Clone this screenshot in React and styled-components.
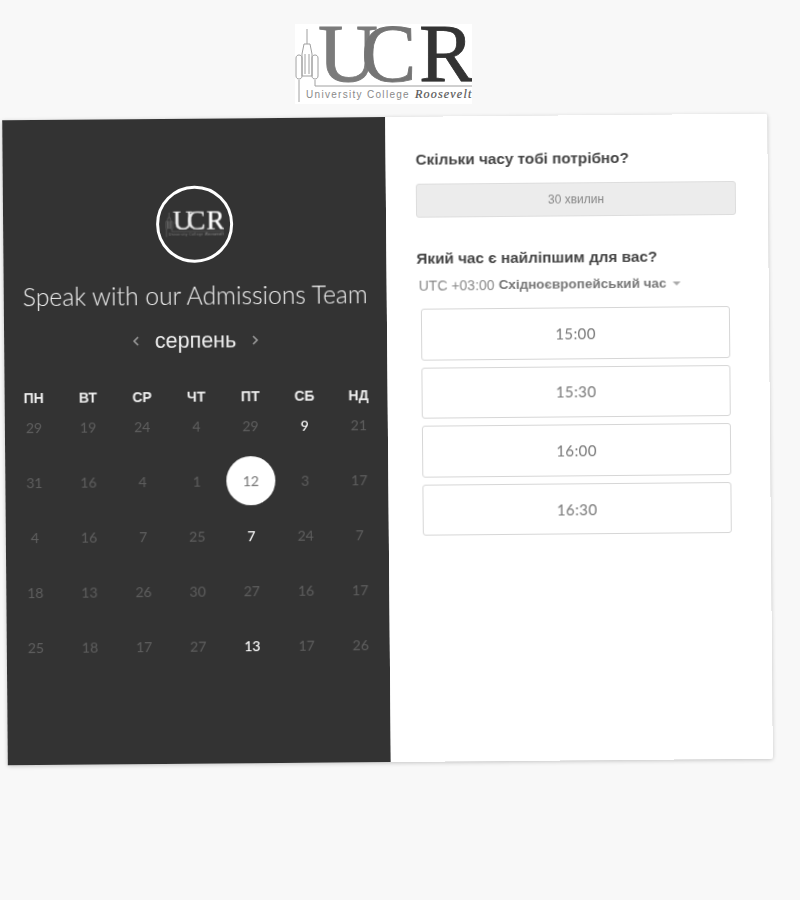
import React from 'react';
import styled, { createGlobalStyle } from 'styled-components';

const GlobalStyle = createGlobalStyle`
  html, body {
    margin: 0;
    padding: 0;
    background: #f8f8f8;
  }
  body {
    font-family: "Liberation Sans", Arial, sans-serif;
  }
`;

const Page = styled.div`
  width: 800px;
  height: 900px;
  padding: 24px 0 0 5px;
  box-sizing: border-box;
  overflow: hidden;
  filter: blur(0.35px);
`;

const LogoWrap = styled.div`
  width: 177px;
  height: 80px;
  margin: 0 0 13px 290px;
  background: #fff;
`;

const LogoSvg = styled.svg`
  display: block;
`;

const Card = styled.div`
  display: flex;
  width: 765px;
  height: 645px;
  transform: rotate(-0.5deg);
  box-shadow: 0 1px 4px rgba(0, 0, 0, 0.22);
  border-radius: 2px;
`;

const LeftPanel = styled.section`
  width: 383px;
  box-sizing: border-box;
  padding: 67px 2px 0;
  background: #333;
  color: #fff;
  display: flex;
  flex-direction: column;
  align-items: center;
`;

const Badge = styled.div`
  width: 77px;
  height: 77px;
  box-sizing: border-box;
  border: 3px solid #fff;
  border-radius: 50%;
  display: flex;
  align-items: center;
  justify-content: center;
`;

const Heading = styled.h1`
  margin: 18px 0 0;
  font: 300 24.7px/30px Lato, sans-serif;
  color: #f2f2f2;
  white-space: nowrap;
`;

const MonthRow = styled.div`
  margin-top: 17px;
  display: flex;
  align-items: center;
  gap: 15px;
  height: 26px;
`;

const MonthName = styled.span`
  font-size: 21.5px;
  line-height: 26px;
  color: #eee;
`;

const Chevron = styled.svg`
  display: block;
`;

const WeekRow = styled.div`
  margin-top: 38px;
  width: 100%;
  display: grid;
  grid-template-columns: repeat(7, 1fr);
  height: 10px;
`;

const WeekDay = styled.span`
  font-size: 14px;
  font-weight: 700;
  line-height: 10px;
  text-align: center;
  color: #eee;
`;

const DayGrid = styled.div`
  width: 100%;
  display: grid;
  grid-template-columns: repeat(7, 1fr);
  grid-auto-rows: 49px;
  row-gap: 6px;
`;

const Day = styled.span`
  justify-self: center;
  width: 49px;
  height: 49px;
  border-radius: 50%;
  display: flex;
  align-items: center;
  justify-content: center;
  font: ${(props) => (props.$active ? 500 : 400)} 14px Lato, sans-serif;
  color: ${(props) => (props.$selected ? '#777' : props.$active ? '#fff' : '#5e5e5e')};
  background: ${(props) => (props.$selected ? '#fff' : 'transparent')};
`;

const RightPanel = styled.section`
  flex: 1;
  box-sizing: border-box;
  padding: 33px 30px 0;
  background: #fff;
  border-radius: 0 2px 2px 0;
`;

const Question = styled.h2`
  margin: ${(props) => props.$top || 0}px 0 0;
  font-size: 15.3px;
  font-weight: 700;
  line-height: 20px;
  color: #444;
`;

const DurationBox = styled.div`
  margin-top: 14px;
  width: 320px;
  height: 34px;
  box-sizing: border-box;
  background: #ececec;
  border: 1px solid #ddd;
  border-radius: 3px;
  display: flex;
  align-items: center;
  justify-content: center;
  font-size: 12px;
  color: #888;
`;

const TimezoneRow = styled.div`
  margin: 7.5px 0 0 2px;
  display: flex;
  align-items: center;
  font-size: 14px;
  line-height: 18px;
  color: #888;
`;

const TimezoneName = styled.strong`
  margin-left: 4px;
  font-size: 13.5px;
  color: #777;
`;

const Caret = styled.span`
  margin: 1px 0 0 6px;
  border-left: 4px solid transparent;
  border-right: 4px solid transparent;
  border-top: 4px solid #aaa;
`;

const SlotList = styled.div`
  margin: 14.5px 0 0 4px;
  display: flex;
  flex-direction: column;
  gap: 7px;
`;

const Slot = styled.button`
  width: 309px;
  height: 51.6px;
  box-sizing: border-box;
  padding: 0;
  background: #fff;
  border: 1px solid #d6d6d6;
  border-radius: 3px;
  font: 400 15px Lato, sans-serif;
  letter-spacing: 0.4px;
  color: #777;
`;

const Logo = ({ light }) => {
  const scale = light ? 0.333 : 1;
  const ink = light
    ? { u: '#eee', c: '#eee', r: '#fff', tower: '#999', small: '#888', script: '#999' }
    : { u: '#7b7b7b', c: '#747474', r: '#333', tower: '#a0a0a0', small: '#8a8a8a', script: '#555' };
  return (
    <LogoSvg width={177 * scale} height={80 * scale} viewBox="0 0 177 80">
      <g fill="none" stroke={ink.tower} strokeWidth="1">
        <path d="M12 5v15M9 20h6l2 10v22H7V30zM10 30v20M14 30v20" />
        <path d="M1 34c0-4 6-4 6 0v18c0 4-6 4-6 0zM17 34c0-4 6-4 6 0v18c0 4-6 4-6 0z" />
        <path d="M4 56v22M20 56v6H177" />
      </g>
      <text y="57" fontFamily='"Liberation Serif", serif' fontSize="83" strokeWidth={light ? 0.6 : 0.8}>
        <tspan x="23" fill={ink.u} stroke={ink.u}>U</tspan>
        <tspan x="66" fill={ink.c} stroke={ink.c}>C</tspan>
        <tspan x="124" fill={ink.r} stroke={ink.r}>R</tspan>
      </text>
      <text x="11" y="74" fontFamily='"Liberation Sans", sans-serif' fontSize="10" letterSpacing="1.3" fill={ink.small}>
        University College
      </text>
      <text x="120" y="74" fontFamily='"Liberation Serif", serif' fontSize="12" fontStyle="italic" letterSpacing="1.2" stroke={ink.script} strokeWidth="0.2" fill={ink.script}>
        Roosevelt
      </text>
    </LogoSvg>
  );
};

const Arrow = ({ d }) => (
  <Chevron width="8" height="12" viewBox="0 0 8 12">
    <path d={d} fill="none" stroke="#9a9a9a" strokeWidth="1.6" />
  </Chevron>
);

const weekDays = ['ПН', 'ВТ', 'СР', 'ЧТ', 'ПТ', 'СБ', 'НД'];
const days = [
  29, 19, 24, 4, 29, 9, 21,
  31, 16, 4, 1, 12, 3, 17,
  4, 16, 7, 25, 7, 24, 7,
  18, 13, 26, 30, 27, 16, 17,
  25, 18, 17, 27, 13, 17, 26,
];
const activeCells = [5, 18, 32];
const selectedCell = 11;
const slots = ['15:00', '15:30', '16:00', '16:30'];

const App = () => (
  <Page>
    <GlobalStyle />
    <LogoWrap>
      <Logo />
    </LogoWrap>
    <Card>
      <LeftPanel>
        <Badge>
          <Logo light />
        </Badge>
        <Heading>Speak with our Admissions Team</Heading>
        <MonthRow>
          <Arrow d="M6 2 2 6l4 4" />
          <MonthName>серпень</MonthName>
          <Arrow d="M2 2l4 4-4 4" />
        </MonthRow>
        <WeekRow>
          {weekDays.map((day) => (
            <WeekDay key={day}>{day}</WeekDay>
          ))}
        </WeekRow>
        <DayGrid>
          {days.map((day, i) => (
            <Day key={i} $active={activeCells.includes(i)} $selected={i === selectedCell}>
              {day}
            </Day>
          ))}
        </DayGrid>
      </LeftPanel>
      <RightPanel>
        <Question>Скільки часу тобі потрібно?</Question>
        <DurationBox>30 хвилин</DurationBox>
        <Question $top={31}>Який час є найліпшим для вас?</Question>
        <TimezoneRow>
          UTC +03:00
          <TimezoneName>Східноєвропейський час</TimezoneName>
          <Caret />
        </TimezoneRow>
        <SlotList>
          {slots.map((slot) => (
            <Slot key={slot}>{slot}</Slot>
          ))}
        </SlotList>
      </RightPanel>
    </Card>
  </Page>
);

export default App;
